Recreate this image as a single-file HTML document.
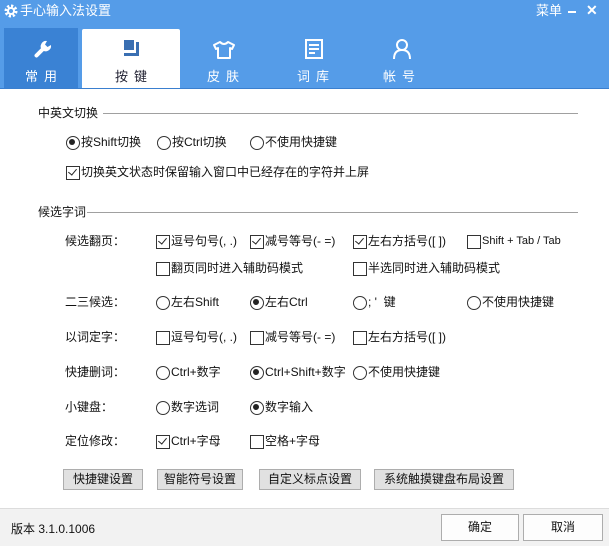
<!DOCTYPE html>
<html><head><meta charset="utf-8"><style>
*{margin:0;padding:0;box-sizing:border-box}
body{width:609px;height:546px;position:relative;overflow:hidden;background:#fff;font-family:"Liberation Sans","Noto Sans CJK SC",sans-serif;font-size:12px;color:#111}
.a{position:absolute;white-space:nowrap;line-height:14px}
.hdr{position:absolute;left:0;top:0;width:609px;height:88px;background:#559ce8}
.tab{position:absolute;text-align:center;color:#fff;font-size:13px;letter-spacing:6px}
.r,.c{position:absolute;white-space:nowrap;line-height:14px;padding-left:15px}
.r:before{content:"";position:absolute;left:0;top:1px;width:12px;height:12px;border:1px solid #333;border-radius:50%;background:#fff}
.r.on:after{content:"";position:absolute;left:3px;top:4px;width:6px;height:6px;border-radius:50%;background:#222}
.c:before{content:"";position:absolute;left:0;top:1px;width:12px;height:12px;border:1px solid #333;background:#fff}
.c.on:after{content:"";position:absolute;left:4px;top:2px;width:4px;height:7px;border:solid #222;border-width:0 1.5px 1.5px 0;transform:rotate(40deg)}
.line{position:absolute;height:1px;background:#a0a0a0}
.btn{position:absolute;height:21px;border:1px solid #adadad;background:#e1e1e1;text-align:center;line-height:19px}
.fb{position:absolute;height:27px;border:1px solid #adadad;background:#fdfdfd;text-align:center;line-height:25px}
</style></head><body>
<div class="hdr"></div>
<svg class="a" style="left:4px;top:4px" width="14" height="14" viewBox="0 0 14 14"><circle cx="7" cy="7" r="5" fill="none" stroke="#fff" stroke-width="3" stroke-dasharray="2.2 1.7"/><circle cx="7" cy="7" r="3" fill="none" stroke="#fff" stroke-width="2"/></svg>
<div class="a" style="left:20px;top:4px;color:#fff;font-size:13px">手心输入法设置</div>
<div class="a" style="left:536px;top:4px;color:#fff;font-size:13px">菜单</div>
<div class="a" style="left:568px;top:11px;width:8px;height:2px;background:#fff"></div>
<div class="a" style="left:586px;top:3px;color:#fff;font-size:14px;font-weight:bold">✕</div>
<div class="a" style="left:4px;top:28px;width:74px;height:60px;background:#3a82d4"></div>
<div class="a" style="left:82px;top:29px;width:98px;height:60px;background:#fff;border-radius:2px 2px 0 0"></div>
<div class="a" style="left:0;top:88px;width:609px;height:1px;background:#3a7fcf"></div>
<svg class="a" style="left:33px;top:39px" width="20" height="20" viewBox="0 0 20 20"><path d="M3.5 16.5 L10 10" stroke="#fff" stroke-width="4" stroke-linecap="round"/><path d="M9 11 A5.5 5.5 0 0 1 14 2 L12 5.5 L14.5 8 L18 6 A5.5 5.5 0 0 1 9 11 Z" fill="#fff"/></svg>
<div class="tab" style="left:4px;top:66px;width:80px">常用</div>
<svg class="a" style="left:122px;top:39px" width="20" height="19" viewBox="0 0 20 19"><rect x="2" y="1" width="10" height="10" fill="#3a6fb2"/><path d="M14 3 H17 V17 H2 V14 H14 Z" fill="#3a6fb2"/></svg>
<div class="tab" style="left:82px;top:66px;width:104px;color:#223">按键</div>
<svg class="a" style="left:212px;top:40px" width="24" height="20" viewBox="0 0 24 20"><path d="M8 2 L2 5 L4 9 L6 8 V18 H18 V8 L20 9 L22 5 L16 2 Q12 6 8 2 Z" fill="none" stroke="#fff" stroke-width="2" stroke-linejoin="round"/></svg>
<div class="tab" style="left:186px;top:66px;width:80px">皮肤</div>
<svg class="a" style="left:305px;top:39px" width="18" height="20" viewBox="0 0 18 20"><rect x="1" y="1" width="16" height="18" fill="none" stroke="#fff" stroke-width="2"/><path d="M4 6H14M4 10H14M4 14H10" stroke="#fff" stroke-width="2"/></svg>
<div class="tab" style="left:276px;top:66px;width:80px">词库</div>
<svg class="a" style="left:392px;top:38px" width="20" height="22" viewBox="0 0 20 22"><circle cx="10" cy="7" r="5" fill="none" stroke="#fff" stroke-width="2"/><path d="M2 21 Q2 12 10 12 Q18 12 18 21" fill="none" stroke="#fff" stroke-width="2"/></svg>
<div class="tab" style="left:362px;top:66px;width:80px">帐号</div>

<div class="a" style="left:38px;top:106px">中英文切换</div>
<div class="line" style="left:103px;top:113px;width:475px"></div>
<div class="r on" style="left:66px;top:135px">按Shift切换</div>
<div class="r" style="left:157px;top:135px">按Ctrl切换</div>
<div class="r" style="left:250px;top:135px">不使用快捷键</div>
<div class="c on" style="left:66px;top:165px">切换英文状态时保留输入窗口中已经存在的字符并上屏</div>
<div class="a" style="left:38px;top:205px">候选字词</div>
<div class="line" style="left:87px;top:212px;width:491px"></div>

<div class="a" style="left:65px;top:234px">候选翻页：</div>
<div class="c on" style="left:156px;top:234px">逗号句号(, .)</div>
<div class="c on" style="left:250px;top:234px">减号等号(- =)</div>
<div class="c on" style="left:353px;top:234px">左右方括号([ ])</div>
<div class="c" style="left:467px;top:234px;font-size:11px">Shift + Tab / Tab</div>
<div class="c" style="left:156px;top:261px">翻页同时进入辅助码模式</div>
<div class="c" style="left:353px;top:261px">半选同时进入辅助码模式</div>

<div class="a" style="left:65px;top:295px">二三候选：</div>
<div class="r" style="left:156px;top:295px">左右Shift</div>
<div class="r on" style="left:250px;top:295px">左右Ctrl</div>
<div class="r" style="left:353px;top:295px">; '&nbsp; 键</div>
<div class="r" style="left:467px;top:295px">不使用快捷键</div>

<div class="a" style="left:65px;top:330px">以词定字：</div>
<div class="c" style="left:156px;top:330px">逗号句号(, .)</div>
<div class="c" style="left:250px;top:330px">减号等号(- =)</div>
<div class="c" style="left:353px;top:330px">左右方括号([ ])</div>

<div class="a" style="left:65px;top:365px">快捷删词：</div>
<div class="r" style="left:156px;top:365px">Ctrl+数字</div>
<div class="r on" style="left:250px;top:365px">Ctrl+Shift+数字</div>
<div class="r" style="left:353px;top:365px">不使用快捷键</div>

<div class="a" style="left:65px;top:400px">小键盘：</div>
<div class="r" style="left:156px;top:400px">数字选词</div>
<div class="r on" style="left:250px;top:400px">数字输入</div>

<div class="a" style="left:65px;top:434px">定位修改：</div>
<div class="c on" style="left:156px;top:434px">Ctrl+字母</div>
<div class="c" style="left:250px;top:434px">空格+字母</div>

<div class="btn" style="left:63px;top:469px;width:80px">快捷键设置</div>
<div class="btn" style="left:157px;top:469px;width:86px">智能符号设置</div>
<div class="btn" style="left:259px;top:469px;width:102px">自定义标点设置</div>
<div class="btn" style="left:374px;top:469px;width:140px">系统触摸键盘布局设置</div>

<div class="a" style="left:0;top:508px;width:609px;height:38px;background:#f2f2f2;border-top:1px solid #dcdcdc"></div>
<div class="a" style="left:11px;top:522px">版本 3.1.0.1006</div>
<div class="fb" style="left:441px;top:514px;width:78px">确定</div>
<div class="fb" style="left:523px;top:514px;width:80px">取消</div>
</body></html>
